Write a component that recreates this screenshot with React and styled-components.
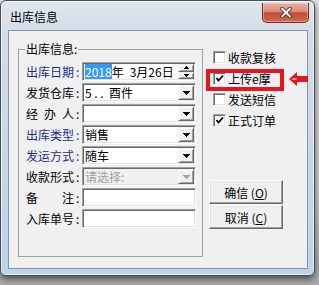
import React from 'react';
import styled, { createGlobalStyle } from 'styled-components';

const GlobalStyle = createGlobalStyle`
  body {
    margin: 0;
    background: #cfcfcf;
    font-family: "Noto Sans CJK SC", "Noto Sans", sans-serif;
    font-size: 12px;
  }
`;

const Desktop = styled.div`
  width: 319px;
  height: 285px;
  overflow: hidden;
  background: linear-gradient(180deg, #e4e4e4 0%, #cdcdcd 70%, #a9a9a9 100%);
`;

const Window = styled.div`
  box-sizing: border-box;
  width: 315px;
  height: 276px;
  display: flex;
  flex-direction: column;
  padding: 0 6px 6px 7px;
  border: 1px solid #46505c;
  border-radius: 6px;
  background: linear-gradient(180deg, #dfe6ee 0%, #d2dce7 14%, #bed3e9 100%);
  box-shadow: inset 0 0 0 1px rgba(255, 255, 255, 0.6), 0 3px 7px rgba(0, 0, 0, 0.6);
`;

const TitleBar = styled.div`
  height: 29px;
  display: flex;
  align-items: flex-start;
  justify-content: space-between;
`;

const Title = styled.div`
  margin: 8px 0 0 2px;
  line-height: 16px;
  color: #000;
`;

const CloseButton = styled.div`
  box-sizing: border-box;
  width: 47px;
  height: 20px;
  margin: 2px -1px 0 0;
  display: flex;
  align-items: center;
  justify-content: center;
  border: 1px solid #6b2a22;
  border-top: none;
  border-radius: 0 0 5px 5px;
  background: linear-gradient(180deg, #eab3a6 0%, #dd8a76 45%, #c34a34 52%, #cf6a52 100%);
  box-shadow: inset 0 0 0 1px rgba(255, 210, 200, 0.5);
`;

const Client = styled.div`
  flex: 1;
  box-sizing: border-box;
  display: flex;
  align-items: flex-start;
  padding: 10px 0 0 9px;
  border: 1px solid #8195ab;
  background: #f0f0f0;
`;

const Group = styled.fieldset`
  box-sizing: border-box;
  width: 185px;
  height: 216px;
  margin: 0;
  padding: 5px 0 0 6px;
  border: 1px solid #a0a0a0;
  min-inline-size: 0;
`;

const Legend = styled.legend`
  padding: 0 1px;
  line-height: 16px;
  color: #000;
`;

const Fields = styled.div`
  display: grid;
  grid-template-columns: 57px 114px;
  grid-auto-rows: 19px;
  row-gap: 2px;
  align-items: center;
`;

const Label = styled.label`
  display: flex;
  align-items: center;
  padding-left: 1px;
  line-height: 19px;
  white-space: nowrap;
  color: ${p => (p.$accent ? '#1d2b8f' : '#000')};
`;

const LabelText = styled.span`
  display: inline-block;
  width: 48px;
  text-align: justify;
  text-align-last: justify;
`;

const Colon = styled.span`
  margin-left: 2px;
`;

const Field = styled.div`
  box-sizing: border-box;
  height: 19px;
  display: flex;
  align-items: stretch;
  padding: 1px;
  border: 1px solid;
  border-color: #a0a0a0 #fff #fff #a0a0a0;
  box-shadow: inset 1px 1px 0 #696969, inset -1px -1px 0 #e3e3e3;
  background: ${p => (p.$disabled ? '#f0f0f0' : '#fff')};
  color: ${p => (p.$disabled ? '#a0a0a0' : '#000')};
`;

const Value = styled.span`
  flex: 1;
  padding-left: 1px;
  line-height: 15px;
  white-space: pre;
  overflow: hidden;
`;

const Selected = styled.span`
  background: #3399ff;
  color: #fff;
`;

const Raised = styled.span`
  box-sizing: border-box;
  display: flex;
  align-items: center;
  justify-content: center;
  background: #f0f0f0;
  border: 1px solid;
  border-color: #f0f0f0 #696969 #696969 #f0f0f0;
  box-shadow: inset 1px 1px 0 #fff, inset -1px -1px 0 #a0a0a0;
`;

const DropButton = styled(Raised)`
  width: 16px;
`;

const Spinner = styled.span`
  width: 16px;
  display: flex;
  flex-direction: column;
`;

const SpinButton = styled(Raised)`
  flex: 1;
`;

const Side = styled.div`
  width: 76px;
  margin-left: 6px;
  padding-top: 6px;
  display: flex;
  flex-direction: column;
`;

const CheckRow = styled.div`
  position: relative;
  height: 21px;
  display: flex;
  align-items: center;
  gap: 2px;
  padding-left: 4px;
  white-space: nowrap;
  color: #000;
`;

const Highlight = styled.span`
  position: absolute;
  left: -3px;
  top: 1px;
  width: 78px;
  height: 22px;
  box-sizing: border-box;
  border: 4px solid #e5161f;
`;

const Pointer = styled.svg`
  position: absolute;
  left: 80px;
  top: 3px;
`;

const CheckBox = styled.span`
  box-sizing: border-box;
  width: 13px;
  height: 13px;
  display: flex;
  align-items: center;
  justify-content: center;
  border: 1px solid;
  border-color: #a0a0a0 #fff #fff #a0a0a0;
  box-shadow: inset 1px 1px 0 #696969, inset -1px -1px 0 #e3e3e3;
  background: #fff;
`;

const Button = styled.button`
  box-sizing: border-box;
  width: 74px;
  height: 24px;
  margin: 0 0 1px;
  padding: 0;
  font: inherit;
  color: #000;
  background: #f0f0f0;
  border: 1px solid;
  border-color: #fff #696969 #696969 #fff;
  box-shadow: inset -1px -1px 0 #a0a0a0, inset 1px 1px 0 #e3e3e3;
  &:first-of-type {
    margin-top: 49px;
  }
`;

const Arrow = ({ color = '#000' }) => (
  <svg width="7" height="4" viewBox="0 0 7 4">
    <path d="M0 0h7v1H6v1H5v1H4v1H3V3H2V2H1V1H0z" fill={color} />
  </svg>
);

const SpinArrow = ({ up }) => (
  <svg width="5" height="3" viewBox="0 0 5 3">
    <path d={up ? 'M2 0h1v1h1v1h1v1H0V2h1V1h1z' : 'M0 0h5v1H4v1H3v1H2V2H1V1H0z'} fill="#000" />
  </svg>
);

const Check = () => (
  <svg width="9" height="9" viewBox="0 0 9 9">
    <polyline points="1.5,4 3.5,6.5 8,1.5" fill="none" stroke="#000" strokeWidth="1.8" />
  </svg>
);

const rows = [
  { label: '出库日期', accent: true, date: true },
  { label: '发货仓库', value: '5 . .  酉件', drop: true },
  { label: '经办人', value: '', drop: true },
  { label: '出库类型', accent: true, value: '销售', drop: true },
  { label: '发运方式', accent: true, value: '随车', drop: true },
  { label: '收款形式', value: '请选择:', drop: true, disabled: true },
  { label: '备注', value: '' },
  { label: '入库单号', value: '' },
];

const options = [
  { label: '收款复核', checked: false },
  { label: '上传e摩', checked: true, marked: true },
  { label: '发送短信', checked: false },
  { label: '正式订单', checked: true },
];

const App = () => (
  <Desktop>
    <GlobalStyle />
    <Window>
      <TitleBar>
        <Title>出库信息</Title>
        <CloseButton>
          <svg width="14" height="11" viewBox="0 0 14 11">
            <path d="M3 1.5l8 8M11 1.5l-8 8" stroke="#4a1a14" strokeWidth="3.6" strokeLinecap="round" />
            <path d="M3 1.5l8 8M11 1.5l-8 8" stroke="#fff" strokeWidth="2" strokeLinecap="round" />
          </svg>
        </CloseButton>
      </TitleBar>
      <Client>
        <Group>
          <Legend>出库信息:</Legend>
          <Fields>
            {rows.map(row => (
              <React.Fragment key={row.label}>
                <Label $accent={row.accent}>
                  <LabelText>{row.label}</LabelText>
                  <Colon>:</Colon>
                </Label>
                <Field $disabled={row.disabled}>
                  {row.date ? (
                    <Value>
                      <Selected>2018</Selected>年{'\u2002'}3月26日
                    </Value>
                  ) : (
                    <Value>{row.value}</Value>
                  )}
                  {row.date && (
                    <Spinner>
                      <SpinButton>
                        <SpinArrow up />
                      </SpinButton>
                      <SpinButton>
                        <SpinArrow />
                      </SpinButton>
                    </Spinner>
                  )}
                  {row.drop && (
                    <DropButton>
                      <Arrow color={row.disabled ? '#a0a0a0' : '#000'} />
                    </DropButton>
                  )}
                </Field>
              </React.Fragment>
            ))}
          </Fields>
        </Group>
        <Side>
          {options.map(opt => (
            <CheckRow key={opt.label}>
              <CheckBox>{opt.checked && <Check />}</CheckBox>
              {opt.label}
              {opt.marked && (
                <>
                  <Highlight />
                  <Pointer width="20" height="16" viewBox="0 0 20 16">
                    <path d="M0 8L8 1v4h11v6H8v4z" fill="#e5161f" />
                    <path d="M3.5 8h4" stroke="#fff" strokeWidth="1.2" />
                  </Pointer>
                </>
              )}
            </CheckRow>
          ))}
          <Button>
            确信 (<u>O</u>)
          </Button>
          <Button>
            取消 (<u>C</u>)
          </Button>
        </Side>
      </Client>
    </Window>
  </Desktop>
);

export default App;
